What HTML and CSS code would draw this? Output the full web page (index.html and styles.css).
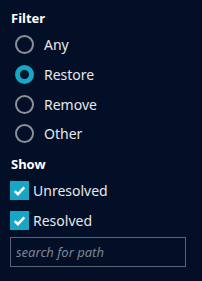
FILE: index.html
```html
<!DOCTYPE html>
<html lang="en">
<head>
    <meta charset="UTF-8">
    <meta name="viewport" content="width=device-width, initial-scale=1.0">
    <title>Filter</title>
    <link rel="stylesheet" href="styles.css">
</head>
<body>
    <div class="panel">
        <!-- filter -->
        <div class="title">Filter</div>
        <div class="radio_list">
            <label class="radio"><input type="radio" name="filter"><span>Any</span></label>
            <label class="radio"><input type="radio" name="filter" checked><span>Restore</span></label>
            <label class="radio"><input type="radio" name="filter"><span>Remove</span></label>
            <label class="radio"><input type="radio" name="filter"><span>Other</span></label>
        </div>
        <!-- show -->
        <div class="title show">Show</div>
        <div class="check_list">
            <label class="check">
                <i><svg viewBox="0 0 18 18"><polyline points="4.5,9.5 7.5,12.5 13.5,6"/></svg></i>
                <span>Unresolved</span>
            </label>
            <label class="check">
                <i><svg viewBox="0 0 18 18"><polyline points="4.5,9.5 7.5,12.5 13.5,6"/></svg></i>
                <span>Resolved</span>
            </label>
        </div>
        <input class="search" type="text" placeholder="search for path">
    </div>
</body>
</html>
```

FILE: styles.css
```css
*{
    padding: 0;
    margin: 0;
    box-sizing: border-box;
}
html, body{
    height: 100%;
}
body{
    background-color: #020f26;
    color: #e8e8e8;
    font-family: "Noto Sans", "Liberation Sans", sans-serif;
}
.panel{
    display: flex;
    flex-direction: column;
    padding: 8px 0 0 10px;
}
.title{
    font-size: 13px;
    font-weight: bold;
    line-height: 20px;
    padding-left: 1px;
    color: #ffffff;
}
.radio_list{
    display: flex;
    flex-direction: column;
    padding-top: 2px;
}
.radio{
    display: flex;
    align-items: center;
    height: 29.7px;
    padding-left: 5px;
    font-size: 14px;
}
.radio input{
    appearance: none;
    width: 19px;
    height: 19px;
    border: 2px solid #8b9099;
    border-radius: 50%;
    margin-right: 10px;
}
.radio input:checked{
    border: 5px solid #17a6c4;
    background-color: #03142c;
}
.show{
    margin-top: 5px;
}
.check_list{
    display: flex;
    flex-direction: column;
    padding-top: 2px;
}
.check{
    display: flex;
    align-items: center;
    height: 29.5px;
    font-size: 14px;
}
.check i{
    display: block;
    width: 19px;
    height: 19px;
    background-color: #17a6c4;
    margin-right: 4px;
}
.check svg{
    display: block;
    width: 19px;
    height: 19px;
    fill: none;
    stroke: #ffffff;
    stroke-width: 2.4;
}
.search{
    width: 176px;
    height: 30px;
    margin-top: 2px;
    background-color: transparent;
    border: 1px solid #5b6372;
    padding-left: 5px;
    font-family: "Noto Sans", "Liberation Sans", sans-serif;
    font-size: 13px;
    color: #e8e8e8;
}
.search::placeholder{
    color: #7d8490;
    font-style: italic;
}
```
